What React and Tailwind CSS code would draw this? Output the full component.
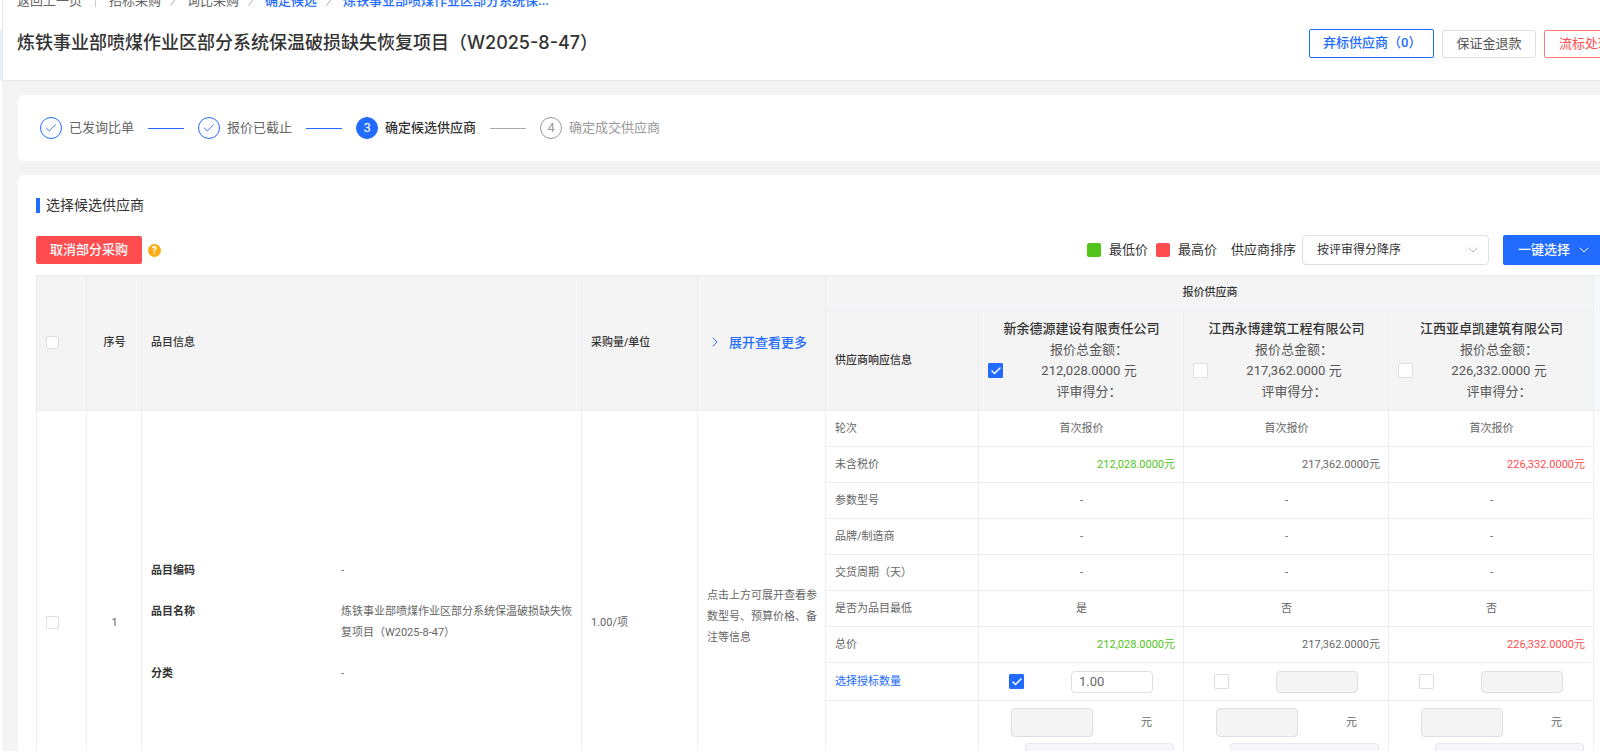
import React from 'react'
import { Check, ChevronDown, ChevronRight } from 'lucide-react'

const suppliers = [
  { id: 's1', name: '新余德源建设有限责任公司', amount: '212,028.0000', lowest: '是', tone: 'text-[#52c41a]', picked: true, qty: '1.00' },
  { id: 's2', name: '江西永博建筑工程有限公司', amount: '217,362.0000', lowest: '否', tone: 'text-[#666666]', picked: false, qty: '' },
  { id: 's3', name: '江西亚卓凯建筑有限公司', amount: '226,332.0000', lowest: '否', tone: 'text-[#ff4d4f]', picked: false, qty: '' },
]

const rows = [
  { label: '轮次', value: () => '首次报价' },
  { label: '未含税价', price: true },
  { label: '参数型号', value: () => '-' },
  { label: '品牌/制造商', value: () => '-' },
  { label: '交货周期（天）', value: () => '-' },
  { label: '是否为品目最低', value: (s) => s.lowest },
  { label: '总价', price: true },
]

const steps = [
  { text: '已发询比单', state: 'done' },
  { text: '报价已截止', state: 'done' },
  { text: '确定候选供应商', state: 'active' },
  { text: '确定成交供应商', state: 'wait' },
]

const circleStyle = {
  done: 'border-[#226bff] text-[#226bff]',
  active: 'border-[#226bff] bg-[#226bff] text-white',
  wait: 'border-[#999999] text-[#999999]',
}

const stepTextStyle = {
  done: 'text-[#666666]',
  active: 'font-medium text-[#333333]',
  wait: 'text-[#999999]',
}

function CheckBox({ label, checked = false, small = false }) {
  return (
    <span className="inline-grid shrink-0 place-items-center align-middle">
      <input
        type="checkbox"
        aria-label={label}
        defaultChecked={checked}
        className={`peer col-start-1 row-start-1 appearance-none rounded-[1px] border border-[#dcdfe6] bg-white checked:border-[#226bff] checked:bg-[#226bff] ${
          small ? 'size-[13px]' : 'size-[15px]'
        }`}
      />
      <Check
        className="pointer-events-none invisible col-start-1 row-start-1 size-3 text-white peer-checked:visible"
        strokeWidth={3}
      />
    </span>
  )
}

function Slash() {
  return (
    <svg viewBox="0 0 8 14" className="h-[14px] w-2 shrink-0 text-[#aaaaaa]" aria-hidden>
      <path d="M0.5 11.5 7.5 2.5" stroke="currentColor" fill="none" />
    </svg>
  )
}

function Breadcrumb() {
  return (
    <nav
      className="-mt-[7px] flex h-4 shrink-0 items-center gap-[9px] text-[13px] leading-4 text-[#666666]"
      aria-label="面包屑"
    >
      <a href="#back">返回上一页</a>
      <span className="mx-1 h-3 w-px bg-[#cccccc]" />
      <a href="#bidding">招标采购</a>
      <Slash />
      <a href="#inquiry">询比采购</a>
      <Slash />
      <a href="#candidate" className="font-medium text-[#226bff]">确定候选</a>
      <Slash />
      <a href="#project" className="font-medium text-[#226bff]">炼铁事业部喷煤作业区部分系统保...</a>
    </nav>
  )
}

function PageHeader() {
  return (
    <header className="flex h-[81px] flex-col border-b border-l border-[#e6e6e6] bg-white pr-4 pl-[14px]">
      <Breadcrumb />
      <div className="mt-[19px] flex h-[30px] items-center justify-between">
        <h1 className="font-[Inter,'Noto_Sans_CJK_SC',sans-serif] text-lg leading-6 font-medium text-[#333333]">
          炼铁事业部喷煤作业区部分系统保温破损缺失恢复项目（W2025-8-47）
        </h1>
        <div className="flex items-end gap-2 text-[13px]">
          <button className="h-[29px] w-[125px] rounded-xs border border-[#226bff] pl-[13px] text-left font-medium whitespace-nowrap text-[#226bff]">
            弃标供应商（0）
          </button>
          <button className="h-7 w-[94px] rounded-xs border border-[#e0e0e0] text-[#555555]">保证金退款</button>
          <button className="h-7 w-[82px] rounded-xs border border-[#ff7875] text-[#ff4d4f]">流标处理</button>
        </div>
      </div>
    </header>
  )
}

function Steps() {
  return (
    <ol className="flex h-[66px] items-center gap-[14px] rounded-md bg-white px-[22px] text-[13px]">
      {steps.map((step, i) => (
        <React.Fragment key={step.text}>
          {i > 0 && <li aria-hidden className={`h-px w-9 ${i === 3 ? 'bg-[#aaaaaa]' : 'bg-[#226bff]'}`} />}
          <li className="flex items-center gap-[7px]">
            <span className={`flex size-[22px] items-center justify-center rounded-full border ${circleStyle[step.state]}`}>
              {step.state === 'done' ? <Check className="size-[14px]" strokeWidth={1.5} /> : i + 1}
            </span>
            <span className={stepTextStyle[step.state]}>{step.text}</span>
          </li>
        </React.Fragment>
      ))}
    </ol>
  )
}

function Toolbar() {
  return (
    <div className="flex h-[30px] items-center justify-between text-[13px] text-[#333333]">
      <div className="flex items-center gap-[6px]">
        <button className="h-7 w-[106px] rounded-xs bg-[#ff4d4f] font-medium text-white">取消部分采购</button>
        <span className="flex size-[13px] items-center justify-center rounded-full bg-[#faad14] text-[10px] font-bold text-white">
          ?
        </span>
      </div>
      <div className="flex items-center">
        <span className="size-[14px] rounded-xs bg-[#52c41a]" />
        <span className="ml-2">最低价</span>
        <span className="ml-2 size-[14px] rounded-xs bg-[#ff4d4f]" />
        <span className="ml-2">最高价</span>
        <label htmlFor="sort" className="ml-[14px]">供应商排序</label>
        <span className="ml-[6px] grid items-center">
          <select
            id="sort"
            className="col-start-1 row-start-1 h-[30px] w-[187px] appearance-none rounded-sm border border-[#dcdfe6] bg-white pl-[14px] text-xs"
          >
            <option>按评审得分降序</option>
          </select>
          <ChevronDown
            className="pointer-events-none col-start-1 row-start-1 mr-2 size-4 justify-self-end text-[#b4b8bf]"
            strokeWidth={1.5}
          />
        </span>
        <button className="ml-[14px] flex h-[30px] w-[105px] items-center gap-[6px] rounded-xs bg-[#226bff] pl-[15px] font-medium text-white">
          一键选择
          <ChevronDown className="size-4" strokeWidth={1.5} />
        </button>
      </div>
    </div>
  )
}

const cell = 'border-r border-b border-[#ebeef5] pr-2 pl-[9px]'
const headCell = `${cell} pb-0.5`

function QuoteTable() {
  return (
    <table className="w-full table-fixed border-separate border-spacing-0 border-t border-l border-[#ebeef5] text-[11px] leading-[21px] text-[#666666]">
      <colgroup>
        <col className="w-[50px]" />
        <col className="w-[55px]" />
        <col />
        <col className="w-[116px]" />
        <col className="w-[128px]" />
        <col className="w-[153px]" />
        <col className="w-[205px]" />
        <col className="w-[205px]" />
        <col className="w-[205px]" />
        <col className="w-[14px]" />
      </colgroup>
      <thead className="bg-[#f4f4f4] text-left text-[#333333]">
        <tr className="h-9">
          <th rowSpan={2} className={headCell}>
            <CheckBox label="全选" small />
          </th>
          <th rowSpan={2} className={`${headCell} text-center font-medium`}>序号</th>
          <th rowSpan={2} className={`${headCell} font-medium`}>品目信息</th>
          <th rowSpan={2} className={`${headCell} font-medium`}>采购量/单位</th>
          <th rowSpan={2} className={headCell}>
            <button className="flex items-center gap-[6px] text-[13px] font-medium text-[#226bff]">
              <ChevronRight className="size-4" strokeWidth={1.5} />
              展开查看更多
            </button>
          </th>
          <th colSpan={4} className={`${headCell} text-center font-medium`}>报价供应商</th>
          <th rowSpan={2} className="border-b border-[#ebeef5] bg-[#f5f7fa]" />
        </tr>
        <tr className="h-[99px]">
          <th className={`${headCell} font-medium`}>供应商响应信息</th>
          {suppliers.map((s) => (
            <th key={s.id} className={`${headCell} text-center text-[13px] font-normal text-[#555555]`}>
              <div className="font-medium text-[#333333]">{s.name}</div>
              <div className="flex items-center">
                <CheckBox label={s.name} checked={s.picked} />
                <div className="flex-1">
                  <div>报价总金额：</div>
                  <div>{s.amount} 元</div>
                  <div>评审得分：</div>
                </div>
              </div>
            </th>
          ))}
        </tr>
      </thead>
      <tbody>
        {rows.map((row, i) => (
          <tr key={row.label} className="h-9">
            {i === 0 && (
              <>
                <td rowSpan={9} className={cell}>
                  <CheckBox label="选择品目1" small />
                </td>
                <td rowSpan={9} className={`${cell} text-center`}>1</td>
                <td rowSpan={9} className={cell}>
                  <dl className="grid grid-cols-[190px_1fr] gap-y-5">
                    <dt className="font-bold text-[#333333]">品目编码</dt>
                    <dd>-</dd>
                    <dt className="font-bold text-[#333333]">品目名称</dt>
                    <dd>炼铁事业部喷煤作业区部分系统保温破损缺失恢复项目（W2025-8-47）</dd>
                    <dt className="font-bold text-[#333333]">分类</dt>
                    <dd>-</dd>
                  </dl>
                </td>
                <td rowSpan={9} className={cell}>1.00/项</td>
                <td rowSpan={9} className={`${cell} pb-3`}>点击上方可展开查看参数型号、预算价格、备注等信息</td>
              </>
            )}
            <td className={cell}>{row.label}</td>
            {suppliers.map((s) =>
              row.price ? (
                <td key={s.id} className={`${cell} text-right ${s.tone}`}>{s.amount}元</td>
              ) : (
                <td key={s.id} className={`${cell} text-center`}>{row.value(s)}</td>
              )
            )}
            <td />
          </tr>
        ))}
        <tr className="h-[38px]">
          <td className={`${cell} text-[#226bff]`}>选择授标数量</td>
          {suppliers.map((s) => (
            <td key={s.id} className={cell}>
              <div className="flex items-center gap-[47px] pl-[21px]">
                <CheckBox label={`授标给${s.name}`} checked={s.picked} />
                <input
                  aria-label="授标数量"
                  defaultValue={s.qty}
                  disabled={!s.picked}
                  className="h-[22px] w-[82px] rounded-sm border border-[#dcdfe6] bg-white px-[7px] text-[13px] disabled:bg-[#f4f4f4]"
                />
              </div>
            </td>
          ))}
          <td />
        </tr>
        <tr className="h-[133px] align-top">
          <td className={cell} />
          {suppliers.map((s) => (
            <td key={s.id} className={`${cell} pt-[7px]`}>
              <div className="flex items-center gap-12 pl-[23px]">
                <input
                  aria-label="授标金额"
                  disabled
                  className="h-[29px] w-[82px] rounded-sm border border-[#dcdfe6] bg-[#f4f4f4] px-[7px]"
                />
                <span>元</span>
              </div>
              <textarea
                aria-label="授标说明"
                disabled
                className="mt-[6px] ml-[37px] block h-[52px] w-[149px] resize-none rounded-sm border border-[#e4e7ed] bg-[#f5f7fa]"
              />
            </td>
          ))}
          <td />
        </tr>
      </tbody>
    </table>
  )
}

export default function App() {
  return (
    <div className="flex h-screen overflow-hidden bg-white font-[Roboto,'Noto_Sans_CJK_SC',sans-serif]">
      <aside className="w-[2px] shrink-0 pt-[29px]">
        <div className="h-[51px] bg-[#e8f1ff]" />
      </aside>
      <div className="-mr-[42px] min-w-0 flex-1 bg-[#f4f4f4]">
        <PageHeader />
        <main className="flex flex-col gap-[14px] px-4 pt-[14px]">
          <Steps />
          <section className="rounded-md bg-white px-[18px] pt-5 pb-6">
            <div className="flex h-5 items-center gap-[6px]">
              <span className="h-[15px] w-1 bg-[#226bff]" />
              <h2 className="text-sm text-[#333333]">选择候选供应商</h2>
            </div>
            <div className="mt-5 mb-[10px]">
              <Toolbar />
            </div>
            <QuoteTable />
          </section>
        </main>
      </div>
    </div>
  )
}
